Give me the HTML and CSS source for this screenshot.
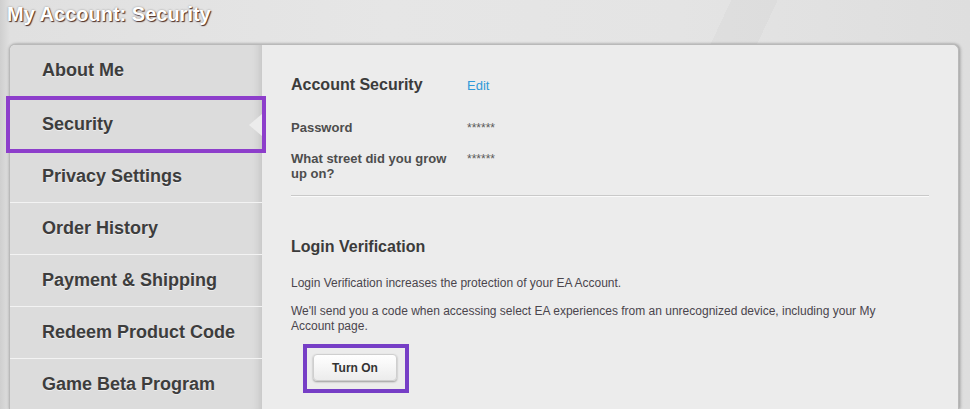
FILE: index.html
```html
<!DOCTYPE html>
<html lang="en">
<head>
<meta charset="utf-8">
<title>My Account: Security</title>
<link rel="stylesheet" href="styles.css">
</head>
<body>
<div class="page">
  <h1 class="title">My Account: Security</h1>
  <div class="panel">
    <nav class="sidebar">
      <a class="nav-item">About Me</a>
      <a class="nav-item active">Security</a>
      <a class="nav-item">Privacy Settings</a>
      <a class="nav-item">Order History</a>
      <a class="nav-item">Payment &amp; Shipping</a>
      <a class="nav-item">Redeem Product Code</a>
      <a class="nav-item">Game Beta Program</a>
    </nav>
    <main class="content">
      <div class="row head-row">
        <h2 class="section-title">Account Security</h2>
        <a class="edit">Edit</a>
      </div>
      <div class="row field-row">
        <div class="label">Password</div>
        <div class="value">******</div>
      </div>
      <div class="row field-row second">
        <div class="label">What street did you grow up on?</div>
        <div class="value">******</div>
      </div>
      <hr class="divider">
      <h2 class="section-title lv">Login Verification</h2>
      <p class="text first">Login Verification increases the protection of your EA Account.</p>
      <p class="text">We'll send you a code when accessing select EA experiences from an unrecognized device, including your My Account page.</p>
      <div class="btn-wrap">
        <span class="highlight"><button class="btn">Turn On</button></span>
      </div>
    </main>
  </div>
</div>
</body>
</html>
```
FILE: styles.css
```css
html, body {
  margin: 0;
  padding: 0;
  height: 100%;
  overflow: hidden;
}
body {
  font-family: "Liberation Sans", Arial, sans-serif;
  background-color: #e2e2e2;
  background-image:
    linear-gradient(115deg, transparent 0 63%, rgba(0,0,0,0.025) 63% 67%, transparent 67%),
    linear-gradient(90deg, #cfcfcf 0, #e0e0e0 10px, #e6e6e6 40%, #e4e4e4 70%, #dedede 100%);
}
.page {
  width: 970px;
  height: 409px;
  display: flex;
  flex-direction: column;
}
.title {
  margin: 0;
  height: 44px;
  flex: none;
  box-sizing: border-box;
  padding: 2px 0 0 7px;
  font-size: 20px;
  line-height: 24px;
  font-weight: bold;
  color: #ffffff;
  text-shadow: 1px 1px 1px rgba(70, 35, 25, 0.95), 0 0 2px rgba(0,0,0,0.35);
}
.panel {
  margin-left: 9px;
  width: 950px;
  flex: 1;
  min-height: 0;
  display: flex;
  border: 1px solid #b9b9b9;
  border-bottom: none;
  border-radius: 6px 6px 0 0;
  box-shadow: 0 0 3px rgba(0,0,0,0.25), 2px 0 3px rgba(0,0,0,0.15);
  box-sizing: border-box;
  background: #ececec;
}
.sidebar {
  width: 252px;
  flex: none;
  background: #dcdcdc;
  border-radius: 5px 0 0 0;
  box-shadow: inset -10px 0 8px -8px rgba(0,0,0,0.12);
  display: flex;
  flex-direction: column;
}
.nav-item {
  position: relative;
  display: flex;
  align-items: center;
  height: 52px;
  flex: none;
  box-sizing: border-box;
  padding-left: 32px;
  font-size: 18px;
  font-weight: bold;
  color: #3d3d3d;
  text-shadow: 0 1px 0 rgba(255,255,255,0.5);
  border-top: 1px solid #f3f3f3;
}
.nav-item:first-child {
  border-top: none;
  height: 53px;
  padding-bottom: 2px;
}
.nav-item.active {
  z-index: 2;
}
.nav-item.active::before {
  content: "";
  position: absolute;
  right: 0;
  top: 15px;
  border-style: solid;
  border-width: 11px 13px 11px 0;
  border-color: transparent #ececec transparent transparent;
}
.nav-item.active::after {
  content: "";
  position: absolute;
  left: -4px;
  right: -4px;
  top: -3px;
  bottom: -3px;
  border: 4px solid #8d3ecb;
}
.content {
  flex: 1;
  padding: 30px 29px 0 29px;
  color: #4a4a4a;
}
.row {
  display: grid;
  grid-template-columns: 176px 1fr;
  align-items: baseline;
}
.section-title {
  margin: 0;
  font-size: 16px;
  line-height: 20px;
  font-weight: bold;
  color: #3b3b3b;
}
.edit {
  font-size: 13px;
  color: #2f9ad9;
}
.field-row {
  margin-top: 25px;
  font-size: 13px;
  line-height: 15px;
}
.field-row.second {
  margin-top: 15px;
}
.label {
  font-weight: bold;
  color: #4d4d4d;
  width: 162px;
}
.value {
  font-size: 12px;
  color: #5a5a5a;
}
.divider {
  margin: 14px 0 0 0;
  border: none;
  border-top: 1px solid #c9c9c9;
  border-bottom: 1px solid #fafafa;
  height: 0;
}
.lv {
  margin-top: 40px;
}
.text {
  margin: 13px 0 0 0;
  font-size: 12px;
  line-height: 15px;
  color: #4a454c;
  max-width: 610px;
}
.text.first {
  margin-top: 19px;
}
.btn-wrap {
  margin-top: 10px;
  padding-left: 12px;
}
.highlight {
  display: inline-block;
  border: 4px solid #763ec6;
  padding: 6px 8px 8px 6px;
}
.btn {
  display: block;
  width: 84px;
  height: 27px;
  border: 1px solid #cfcfcf;
  border-radius: 4px;
  background: linear-gradient(#ffffff, #ececec);
  box-shadow: 0 1px 2px rgba(0,0,0,0.35);
  font-family: "Liberation Sans", Arial, sans-serif;
  font-size: 12px;
  font-weight: bold;
  color: #333;
  padding: 0;
}
```
